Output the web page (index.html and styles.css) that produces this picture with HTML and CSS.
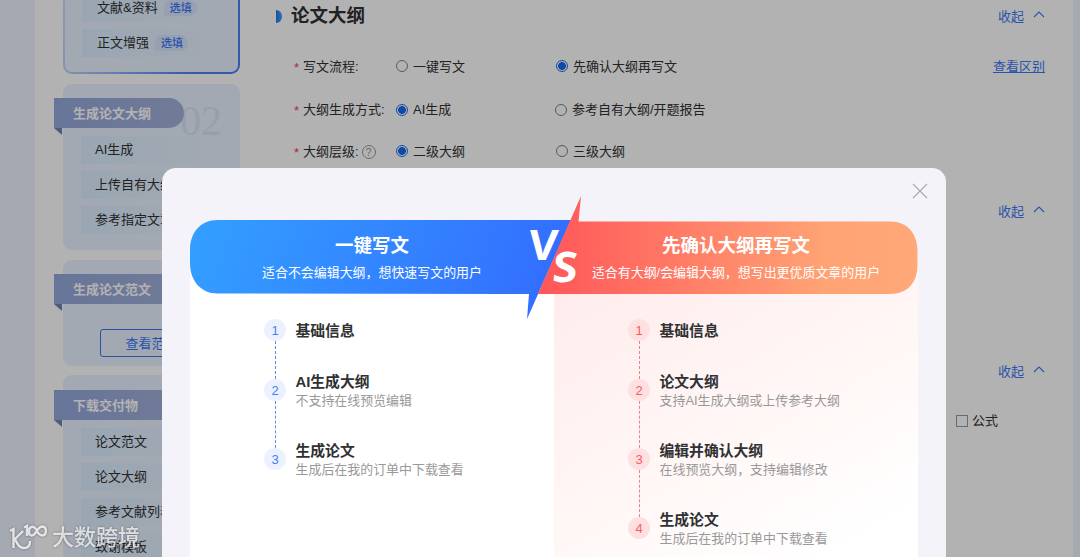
FILE: index.html
```html
<!DOCTYPE html>
<html lang="zh-CN">
<head>
  <meta charset="UTF-8">
  <meta name="viewport" content="width=device-width, initial-scale=1.0">
  <title>论文大纲</title>
  <link rel="stylesheet" href="styles.css">
</head>
<body>
  <div class="page">
    <aside class="sidebar">
      <section class="side-card active">
        <ul class="side-list">
          <li>文献&amp;资料<span class="tag">选填</span></li>
          <li>正文增强<span class="tag">选填</span></li>
        </ul>
      </section>
      <section class="side-card outline-card">
        <span class="card-no">02</span>
        <h3 class="ribbon">生成论文大纲</h3>
        <ul class="side-list">
          <li>AI生成</li>
          <li>上传自有大纲</li>
          <li>参考指定文章</li>
        </ul>
      </section>
      <section class="side-card sample-card">
        <h3 class="ribbon">生成论文范文</h3>
        <button class="sample-btn">查看范文</button>
      </section>
      <section class="side-card download-card">
        <h3 class="ribbon">下载交付物</h3>
        <ul class="side-list">
          <li>论文范文</li>
          <li>论文大纲</li>
          <li>参考文献列表</li>
          <li>致谢模板</li>
        </ul>
      </section>
    </aside>

    <main class="content">
      <section class="block block-outline">
        <div class="block-head">
          <h2>论文大纲</h2>
          <a class="fold">收起<svg width="12" height="7" viewBox="0 0 12 7"><path d="M1 6 L6 1 L11 6"/></svg></a>
        </div>
        <div class="form-row row-flow">
          <div class="label"><i>*</i>写文流程:</div>
          <label class="option"><span class="radio"></span>一键写文</label>
          <label class="option"><span class="radio checked"></span>先确认大纲再写文</label>
          <a class="diff-link">查看区别</a>
        </div>
        <div class="form-row row-mode">
          <div class="label"><i>*</i>大纲生成方式:</div>
          <label class="option"><span class="radio checked"></span>AI生成</label>
          <label class="option"><span class="radio"></span>参考自有大纲/开题报告</label>
        </div>
        <div class="form-row row-level">
          <div class="label"><i>*</i>大纲层级:<span class="help">?</span></div>
          <label class="option"><span class="radio checked"></span>二级大纲</label>
          <label class="option"><span class="radio"></span>三级大纲</label>
        </div>
      </section>
      <section class="block block-middle">
        <div class="block-head">
          <a class="fold">收起<svg width="12" height="7" viewBox="0 0 12 7"><path d="M1 6 L6 1 L11 6"/></svg></a>
        </div>
      </section>
      <section class="block">
        <div class="block-head">
          <a class="fold">收起<svg width="12" height="7" viewBox="0 0 12 7"><path d="M1 6 L6 1 L11 6"/></svg></a>
        </div>
        <label class="check-item"><span class="checkbox"></span>公式</label>
      </section>
    </main>
  </div>

  <div class="mask">
    <div class="modal">
      <svg class="close" width="16" height="16" viewBox="0 0 16 16"><path d="M1 1 L15 15 M15 1 L1 15"/></svg>
      <div class="banner">
        <svg class="banner-bg" width="728" height="124" viewBox="0 0 728 124">
          <defs>
            <linearGradient id="blue" x1="0" y1="0" x2="1" y2="0.1">
              <stop offset="0" stop-color="#33a0ff"/>
              <stop offset="1" stop-color="#336eff"/>
            </linearGradient>
            <linearGradient id="red" x1="0" y1="0" x2="1" y2="0">
              <stop offset="0" stop-color="#ff5558"/>
              <stop offset="0.75" stop-color="#ffa274"/>
              <stop offset="1" stop-color="#ffa878"/>
            </linearGradient>
          </defs>
          <path fill="url(#blue)" d="M28 24 H381 L337 123 L339 98 L28 97.500 C10 97.500 0 84 0 67 V54 C0 37 10 24 28 24 Z"/>
          <path fill="url(#red)" d="M391 0 L388.500 25.500 H700 C718 25.500 727.500 38 727.500 55 V69 C727.500 86 718 98 700 98 H348 Z"/>
          <text class="vs" transform="translate(337.500 64) skewX(-5)" textLength="29" lengthAdjust="spacingAndGlyphs">V</text>
          <text class="vs" transform="translate(361.500 85.500) skewX(-5)" textLength="25" lengthAdjust="spacingAndGlyphs">S</text>
        </svg>
        <div class="banner-col">
          <h4>一键写文</h4>
          <p>适合不会编辑大纲，想快速写文的用户</p>
        </div>
        <div class="banner-col">
          <h4>先确认大纲再写文</h4>
          <p>适合有大纲/会编辑大纲，想写出更优质文章的用户</p>
        </div>
      </div>
      <div class="panels">
        <ol class="steps steps-blue">
          <li><span class="num">1</span><div><h5>基础信息</h5></div></li>
          <li><span class="num">2</span><div><h5>AI生成大纲</h5><p>不支持在线预览编辑</p></div></li>
          <li><span class="num">3</span><div><h5>生成论文</h5><p>生成后在我的订单中下载查看</p></div></li>
        </ol>
        <ol class="steps steps-red">
          <li><span class="num">1</span><div><h5>基础信息</h5></div></li>
          <li><span class="num">2</span><div><h5>论文大纲</h5><p>支持AI生成大纲或上传参考大纲</p></div></li>
          <li><span class="num">3</span><div><h5>编辑并确认大纲</h5><p>在线预览大纲，支持编辑修改</p></div></li>
          <li><span class="num">4</span><div><h5>生成论文</h5><p>生成后在我的订单中下载查看</p></div></li>
        </ol>
      </div>
    </div>
  </div>

  <div class="watermark">
    <svg width="39" height="28" viewBox="0 0 39 28">
      <path d="M1 7 L4.500 5 V24 M14 7 L6 15 C8 20 11 24 15 24 C19 24 21 21 21 17"/>
      <path d="M15 3.500 L18 2 V12 M28 7 C26 3 24 2.500 22.500 3 C19 4 19 11 23 11.500 C27 11.500 28 3 33 2.500 C38 2.500 38 11 33.500 11.500 C31 11.500 29 9 28 7"/>
    </svg>
    <span>大数跨境</span>
  </div>
</body>
</html>
```

FILE: styles.css
```css
:root {
  --blue: #3b78f5;
  --text: #303133;
}
* {
  box-sizing: border-box;
  margin: 0;
  padding: 0;
}
body {
  height: 557px;
  overflow: hidden;
  background: #ecf3ff;
  color: var(--text);
  font-family: "Liberation Sans", "Noto Sans CJK SC", sans-serif;
  font-size: 13px;
  line-height: 20px;
}
ul, ol {
  list-style: none;
}
.page {
  display: flex;
  height: 557px;
  margin: 0 7px 0 35px;
  background: #fff;
  overflow: hidden;
}

/* 左侧步骤栏 */
.sidebar {
  width: 205px;
  padding-left: 28px;
  flex-shrink: 0;
}
.side-card {
  position: relative;
  width: 177px;
  margin-bottom: 10px;
  border-radius: 9px;
  background: #e9f2ff;
}
.side-card.active {
  height: 84px;
  margin-top: -10px;
  padding-top: 2px;
  border: 2px solid transparent;
  background: linear-gradient(#e9f2ff, #e9f2ff) padding-box, linear-gradient(100deg, #ccdbff, #4a82f5 75%) border-box;
}
.active .side-list {
  padding: 0 17px;
}
.active .side-list li {
  padding-left: 15px;
}
.outline-card {
  height: 166px;
  padding-top: 14px;
}
.sample-card {
  height: 106px;
  padding-top: 14px;
}
.download-card {
  height: 210px;
  margin-top: -1px;
  padding-top: 15px;
}
.side-list {
  padding: 8px 18px 0;
}
.side-list li {
  display: flex;
  align-items: center;
  height: 28px;
  margin-bottom: 7px;
  padding-left: 14px;
  background: linear-gradient(90deg, #dceeff, #e9f2ff);
  white-space: nowrap;
}
.tag {
  height: 16px;
  margin-left: 6px;
  padding: 0 5px 0 6px;
  border-radius: 8px 8px 8px 0;
  background: #d9e6ff;
  color: var(--blue);
  font-size: 11px;
  font-weight: 500;
  line-height: 16px;
}
.card-no {
  position: absolute;
  top: 15px;
  right: 18px;
  color: #dae4f5;
  font-family: "Liberation Serif", serif;
  font-size: 42px;
  line-height: 44px;
}
.ribbon {
  position: relative;
  width: 130px;
  height: 30px;
  margin-left: -9px;
  padding-left: 19px;
  border-radius: 0 15px 15px 0;
  background: linear-gradient(90deg, #94a8db, #a3b1da);
  color: #fff;
  font-size: 13px;
  font-weight: 700;
  line-height: 32px;
}
.ribbon::after {
  content: "";
  position: absolute;
  left: 0;
  top: 30px;
  border-top: 7px solid #6f83b6;
  border-left: 8px solid transparent;
}
.sample-btn {
  display: block;
  width: 103px;
  height: 28px;
  margin: 25px auto 0;
  border: 1px solid var(--blue);
  border-radius: 3px;
  background: transparent;
  color: var(--blue);
  font: inherit;
  line-height: 28px;
}

/* 右侧表单 */
.content {
  flex: 1;
  padding: 4px 28px 0 36px;
}
.block-outline {
  height: 195px;
}
.block-middle {
  height: 160px;
}
.block-head {
  display: flex;
  align-items: center;
  height: 24px;
}
.block-head h2 {
  display: flex;
  align-items: center;
  font-size: 18.5px;
  font-weight: 700;
}
.block-head h2::before {
  content: "";
  width: 6px;
  height: 13px;
  margin-right: 9px;
  border-radius: 0 6px 6px 0;
  background: linear-gradient(90deg, #2872ee, #41a4ff);
}
.fold {
  display: flex;
  align-items: center;
  gap: 9px;
  margin-left: auto;
  padding-top: 1px;
  color: var(--blue);
}
.fold svg {
  margin-top: -4px;
  fill: none;
  stroke: var(--blue);
  stroke-width: 1.1;
}
.form-row {
  display: grid;
  grid-template-columns: 102px 160px 1fr auto;
  align-items: center;
  height: 20px;
  margin-left: 18px;
}
.row-flow {
  margin-top: 28px;
}
.row-mode {
  grid-template-columns: 102px 159px 1fr;
  margin-top: 23px;
}
.row-level {
  margin-top: 22px;
}
.label {
  display: flex;
  align-items: center;
  white-space: nowrap;
}
.label i {
  width: 9px;
  color: #f04055;
  font-style: normal;
  line-height: 14px;
  padding-top: 3px;
}
.option {
  display: flex;
  align-items: center;
  gap: 5px;
  padding-top: 1px;
}
.radio {
  width: 12px;
  height: 12px;
  margin-bottom: 3px;
  border: 1px solid #808080;
  border-radius: 50%;
}
.row-mode .radio {
  margin-bottom: 0;
}
.radio.checked {
  border-color: #1b6ef0;
  background: radial-gradient(circle, #1668ec 3.6px, #fff 4.2px);
}
.help {
  width: 14px;
  height: 14px;
  margin: 1px 0 0 3px;
  border: 1px solid #999;
  border-radius: 50%;
  color: #999;
  font-size: 11px;
  line-height: 12px;
  text-align: center;
}
.diff-link {
  padding-top: 1px;
  color: var(--blue);
  text-decoration: underline;
}
.check-item {
  display: flex;
  align-items: center;
  gap: 4px;
  margin: 28px 0 0 680px;
}
.checkbox {
  width: 12px;
  height: 12px;
  border: 1px solid #999;
}

/* 对比弹窗 */
.mask {
  position: fixed;
  inset: 0;
  padding: 168px 134px 0 162px;
  background: rgba(0, 0, 0, 0.3);
}
.modal {
  position: relative;
  height: 450px;
  padding: 52px 28px 0;
  border-radius: 14px;
  background: #f3f3f9;
}
.close {
  position: absolute;
  top: 15px;
  right: 18px;
  fill: none;
  stroke: #aaabb0;
  stroke-width: 1.2;
}
.banner {
  position: relative;
  z-index: 1;
  display: flex;
  height: 74px;
  padding-top: 13px;
  color: #fff;
  text-align: center;
}
.banner-bg {
  position: absolute;
  left: 0;
  top: -24px;
}
.vs {
  fill: #fff;
  font-family: "Noto Sans", sans-serif;
  font-size: 42px;
  font-weight: 700;
}
.banner-col {
  position: relative;
  width: 364px;
  white-space: nowrap;
}
.banner-col h4 {
  font-size: 18.5px;
  line-height: 26px;
}
.banner-col p {
  font-size: 12.95px;
  line-height: 28px;
}
.panels {
  display: flex;
  height: 400px;
  margin-top: -37px;
}
.steps {
  width: 364px;
  padding: 62px 0 0 74px;
}
.steps-blue {
  background: #fff;
}
.steps-red {
  background: linear-gradient(150deg, #ffebeb, #fff8f7 50%, #fff 75%);
}
.steps li {
  position: relative;
  display: flex;
  align-items: center;
  gap: 9.5px;
  height: 39px;
  margin-bottom: 30px;
}
.steps li:first-child {
  height: 22px;
}
.steps li + li::before {
  content: "";
  position: absolute;
  left: 11px;
  bottom: 31px;
  height: 47px;
  border-left: 1px dashed var(--line);
}
.steps li:nth-child(2)::before {
  height: 38px;
}
.num {
  width: 22px;
  height: 22px;
  border-radius: 50%;
  font-size: 13px;
  line-height: 23px;
  text-align: center;
}
.steps li + li .num {
  margin-bottom: 2px;
}
.steps-blue {
  --line: #5a8ddd;
}
.steps-red {
  --line: #e3868c;
}
.steps-blue .num {
  background: #ebf1ff;
  color: #4480f8;
}
.steps-red .num {
  background: #ffe0e1;
  color: #f95b60;
}
.steps h5 {
  padding-top: 1px;
  font-size: 14.8px;
  line-height: 20px;
}
.steps p {
  margin-top: -1px;
  color: #999;
  font-size: 12.95px;
  line-height: 19px;
}

/* 水印 */
.watermark {
  position: fixed;
  left: 9px;
  bottom: 4px;
  display: flex;
  align-items: center;
  gap: 4px;
  color: rgba(255, 255, 255, 0.75);
  font-size: 22px;
  font-weight: 500;
  line-height: 30px;
  filter: drop-shadow(0 0 1px rgba(0, 0, 0, 0.5));
}
.watermark svg {
  fill: none;
  stroke: rgba(255, 255, 255, 0.8);
  stroke-width: 2.4;
}
```
